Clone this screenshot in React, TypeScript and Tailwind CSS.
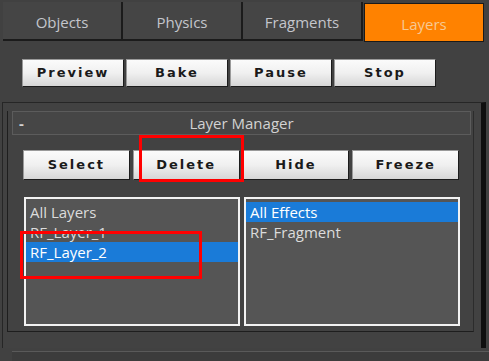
import React from "react";

const tabs = ["Objects", "Physics", "Fragments", "Layers"];
const topButtons = ["Preview", "Bake", "Pause", "Stop"];
const layerButtons = ["Select", "Delete", "Hide", "Freeze"];

function ToolButton({ label, tall }: { label: string; tall?: boolean }) {
  return (
    <button
      className={`${tall ? "h-[30px]" : "h-[28px]"} flex-1 border border-[#1c1c1c] border-t-[#9a9a9a] border-l-[#9a9a9a] bg-gradient-to-b from-[#fbfbfb] via-[#f0f0f0] to-[#d6d6d6] text-[13px] font-bold tracking-[2px] text-[#1a1a1a]`}
      style={{ fontFamily: '"DejaVu Sans", Verdana, sans-serif' }}
    >
      {label}
    </button>
  );
}

function ListBox({ items, selected }: { items: string[]; selected: number }) {
  return (
    <div className="h-[129px] flex-1 border-2 border-[#f2f2f2] bg-[#555555] pt-[3px]">
      {items.map((item, i) => (
        <div
          key={item}
          className={`h-[20px] px-[4px] text-[15px] leading-[20px] ${
            i === selected ? "bg-[#1a7bd8] text-white" : "text-[#dcdcdc]"
          }`}
        >
          {item}
        </div>
      ))}
    </div>
  );
}

export default function App() {
  return (
    <div
      className="relative h-[361px] w-[489px] overflow-hidden bg-[#414141]"
      style={{ fontFamily: '"Open Sans", "Noto Sans", sans-serif' }}
    >
      {/* tab strip */}
      <div className="flex px-[3px] pt-[2px]">
        {tabs.map((t) => {
          const active = t === "Layers";
          return (
            <div
              key={t}
              className={`flex h-[39px] w-[120px] items-center justify-center pt-[3px] text-[15px] ${
                active
                  ? "ml-[1px] mt-[1px] h-[37px] border border-[#1a1a1a] bg-[#ff8200] text-[#f7c993]"
                  : "border-b-2 border-r-2 border-[#1b1b1b] bg-[#454545] text-[#c4c6cc]"
              }`}
            >
              {t}
            </div>
          );
        })}
      </div>

      {/* simulation buttons */}
      <div className="mt-[17px] flex w-[436px] gap-[2px] pl-[22px]">
        {topButtons.map((b) => (
          <ToolButton key={b} label={b} />
        ))}
      </div>

      {/* rollout panel */}
      <div className="mx-[2px] mt-[15px] h-[246px] w-[484px] border-l border-t border-[#262626] border-r-[5px] border-r-[#0f0f0f] bg-[#424242] pt-[20px]">
        <div className="ml-[4px] h-[221px] w-[467px] border-b border-l border-r border-[#1e1e1e] border-r-[#2c2c2c]">
          <div className="-mt-[12px] ml-[4px] flex h-[24px] w-[459px] items-center border border-[#5c5c5c] bg-[#464646] text-[15px] text-[#d2d2d2]">
            <span className="w-[20px] pl-[6px] font-bold">-</span>
            <span className="flex-1 pr-[20px] text-center">Layer Manager</span>
          </div>

          <div className="mt-[15px] flex w-[451px] gap-[3px] pl-[15px]">
            {layerButtons.map((b) => (
              <ToolButton key={b} label={b} tall />
            ))}
          </div>

          <div className="mt-[17px] flex w-[452px] gap-[4px] pl-[16px]">
            <ListBox items={["All Layers", "RF_Layer_1", "RF_Layer_2"]} selected={2} />
            <ListBox items={["All Effects", "RF_Fragment"]} selected={0} />
          </div>
        </div>
      </div>

      <div className="ml-[12px] mt-[3px] h-[10px] border-t border-[#5a5a5a] bg-[#3c3c3c]" />

      {/* annotation boxes */}
      <div className="absolute left-[139px] top-[135px] h-[47px] w-[105px] border-[3px] border-[#ff0000]" />
      <div className="absolute left-[20px] top-[231px] h-[48px] w-[182px] border-[3px] border-[#ff0000]" />
    </div>
  );
}
